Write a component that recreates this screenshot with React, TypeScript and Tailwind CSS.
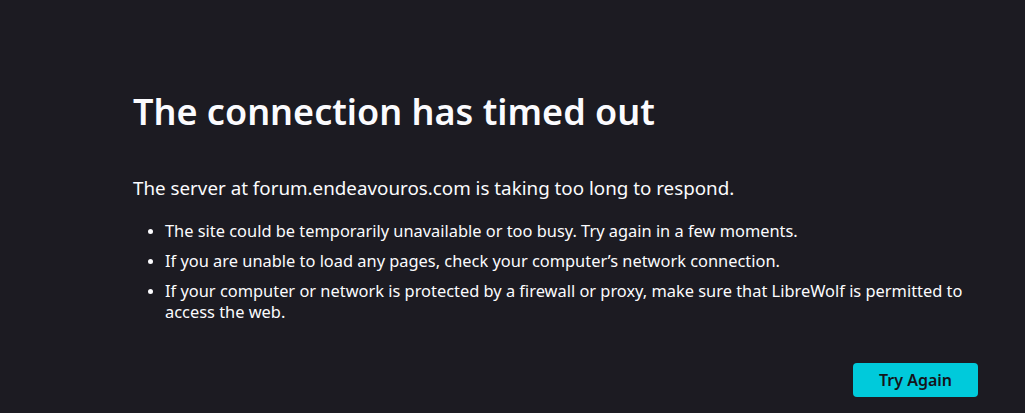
export default function App() {
  return (
    <div className="min-h-[413px] w-full bg-[#1c1b22] text-[#fbfbfe] font-['Noto_Sans',sans-serif]">
      <div className="ml-[133px] w-[845px] pt-[88px]">
        <h1 className="text-[36px] font-semibold leading-[48px]">The connection has timed out</h1>
        <p className="mt-[39px] text-[18.8px] leading-[26px]">
          The server at forum.endeavouros.com is taking too long to respond.
        </p>
        <ul className="mt-[19px] list-disc pl-[32px] text-[16.4px] leading-[21px] marker:text-[14px]">
          <li className="mb-[9px]">The site could be temporarily unavailable or too busy. Try again in a few moments.</li>
          <li className="mb-[9px]">If you are unable to load any pages, check your computer’s network connection.</li>
          <li>
            If your computer or network is protected by a firewall or proxy, make sure that LibreWolf is permitted to access the web.
          </li>
        </ul>
        <div className="mt-[41px] flex justify-end">
          <button className="h-[34px] w-[125px] rounded-[4px] bg-[#00cadb] text-[16px] font-semibold text-[#15141a]">
            Try Again
          </button>
        </div>
      </div>
    </div>
  )
}
